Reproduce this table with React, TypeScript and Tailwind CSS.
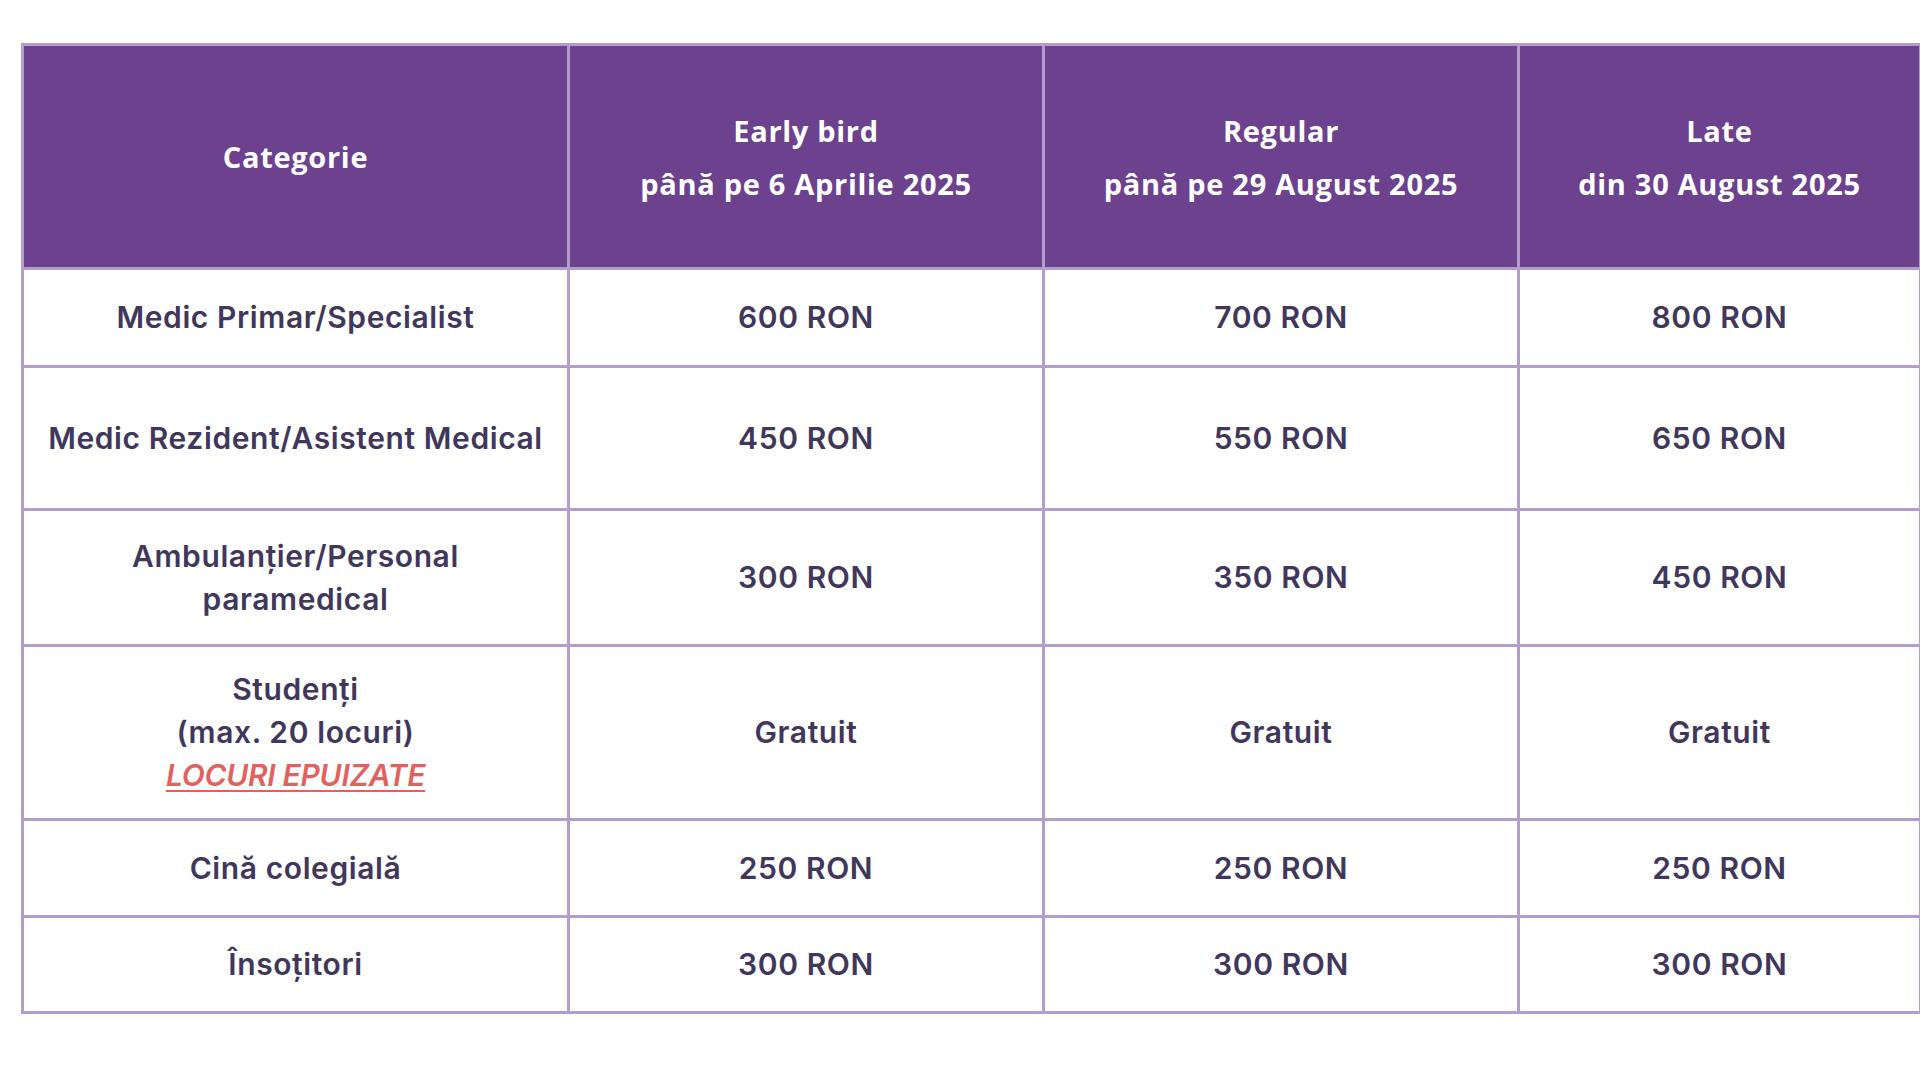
const rows = [
  { cat: ["Medic Primar/Specialist"], prices: ["600 RON", "700 RON", "800 RON"], h: "h-[98px]" },
  { cat: ["Medic Rezident/Asistent Medical"], prices: ["450 RON", "550 RON", "650 RON"], h: "h-[143px]" },
  { cat: ["Ambulanțier/Personal", "paramedical"], prices: ["300 RON", "350 RON", "450 RON"], h: "h-[136px]" },
  { cat: ["Studenți", "(max. 20 locuri)"], note: "LOCURI EPUIZATE", prices: ["Gratuit", "Gratuit", "Gratuit"], h: "h-[174px]" },
  { cat: ["Cină colegială"], prices: ["250 RON", "250 RON", "250 RON"], h: "h-[97px]" },
  { cat: ["Însoțitori"], prices: ["300 RON", "300 RON", "300 RON"], h: "h-[96px]" },
];

const headers = [
  ["Categorie"],
  ["Early bird", "până pe 6 Aprilie 2025"],
  ["Regular", "până pe 29 August 2025"],
  ["Late", "din 30 August 2025"],
];

export default function App() {
  return (
    <div className="min-h-screen w-[1920px] h-[1080px] bg-white pt-[43px] pl-[21px] overflow-hidden">
      <table className="table-fixed border-collapse w-[1898px]">
        <colgroup>
          <col className="w-[546px]" />
          <col className="w-[475px]" />
          <col className="w-[475px]" />
          <col className="w-[402px]" />
        </colgroup>
        <thead>
          <tr className="h-[224px]">
            {headers.map((lines, i) => (
              <th
                key={i}
                className="border-[3px] border-[#b39dcb] bg-[#6c418d] text-white text-center align-middle font-bold text-[29px] leading-[53px] tracking-[0.7px] font-['Open_Sans',sans-serif]"
              >
                {lines.map((l) => (
                  <div key={l}>{l}</div>
                ))}
              </th>
            ))}
          </tr>
        </thead>
        <tbody>
          {rows.map((r, i) => (
            <tr key={i} className={r.h}>
              <td className="border-[3px] border-[#b39dcb] text-center align-middle text-[#41375b] font-semibold text-[30px] leading-[43px] tracking-[0.6px] font-['Inter',sans-serif]">
                {r.cat.map((l) => (
                  <div key={l}>{l}</div>
                ))}
                {r.note && (
                  <div className="italic text-[#e0625f] underline decoration-2 underline-offset-4 tracking-[-0.3px]">{r.note}</div>
                )}
              </td>
              {r.prices.map((p, j) => (
                <td
                  key={j}
                  className="border-[3px] border-[#b39dcb] text-center align-middle text-[#41375b] font-semibold text-[30px] tracking-[0.6px] font-['Inter',sans-serif]"
                >
                  {p}
                </td>
              ))}
            </tr>
          ))}
        </tbody>
      </table>
    </div>
  );
}
